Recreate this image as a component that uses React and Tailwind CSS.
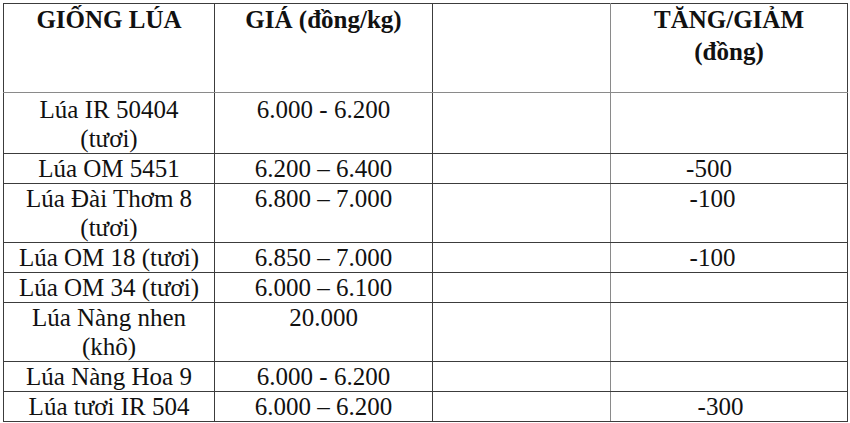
import React from 'react';

const rows = [
    { h: 'h-[60px]', name: ['Lúa IR 50404', '(tươi)'], price: '6.000 - 6.200', delta: '', pad: '', top: 'pt-[2px]' },
    { h: 'h-[30px]', name: ['Lúa OM 5451'], price: '6.200 – 6.400', delta: '-500', pad: 'pr-[40px]', top: '' },
    { h: 'h-[59px]', name: ['Lúa Đài Thơm 8', '(tươi)'], price: '6.800 – 7.000', delta: '-100', pad: 'pr-[33px]', top: '' },
    { h: 'h-[30px]', name: ['Lúa OM 18 (tươi)'], price: '6.850 – 7.000', delta: '-100', pad: 'pr-[33px]', top: '' },
    { h: 'h-[30px]', name: ['Lúa OM 34 (tươi)'], price: '6.000 – 6.100', delta: '', pad: '', top: '' },
    { h: 'h-[59px]', name: ['Lúa Nàng nhen', '(khô)'], price: '20.000', delta: '', pad: '', top: '' },
    { h: 'h-[30px]', name: ['Lúa Nàng Hoa 9'], price: '6.000 - 6.200', delta: '', pad: '', top: '' },
    { h: 'h-[30px]', name: ['Lúa tươi IR 504'], price: '6.000 – 6.200', delta: '-300', pad: 'pr-[17px]', top: '' },
];

const cell = 'border border-[#3c3c3c] p-0 align-top text-center';

const App = () => {
    return (
        <div className="w-[850px] h-[423px] bg-white overflow-hidden pt-[3px] pl-[3px] font-['Liberation_Serif','Times_New_Roman',serif]">
            <table className="table-fixed border-collapse w-[844px] text-[#111] text-[25px] leading-[29px] font-['Liberation_Serif','Times_New_Roman',serif]">
                <colgroup>
                    <col className="w-[211px]" />
                    <col className="w-[218px]" />
                    <col className="w-[178px]" />
                    <col className="w-[237px]" />
                </colgroup>
                <thead>
                    <tr className="h-[89px] font-bold leading-[32px]">
                        <th className={`${cell} border-b-[#8a8a8a]`}>GIỐNG LÚA</th>
                        <th className={`${cell} border-b-[#8a8a8a]`}>GIÁ (đồng/kg)</th>
                        <th className={`${cell} border-b-[#8a8a8a] border-r-[#8a8a8a]`}></th>
                        <th className={`${cell} border-b-[#8a8a8a]`}>
                            <div>TĂNG/GIẢM</div>
                            <div>(đồng)</div>
                        </th>
                    </tr>
                </thead>
                <tbody>
                    {rows.map((row, i) => (
                        <tr key={i} className={row.h}>
                            <td className={`${cell} ${row.top}`}>
                                {row.name.map((line, j) => (
                                    <div key={j}>{line}</div>
                                ))}
                            </td>
                            <td className={`${cell} ${row.top}`}>{row.price}</td>
                            <td className={`${cell} border-r-[#8a8a8a]`}></td>
                            <td className={`${cell} ${row.pad} ${row.top}`}>{row.delta}</td>
                        </tr>
                    ))}
                </tbody>
            </table>
        </div>
    );
};

export default App;
